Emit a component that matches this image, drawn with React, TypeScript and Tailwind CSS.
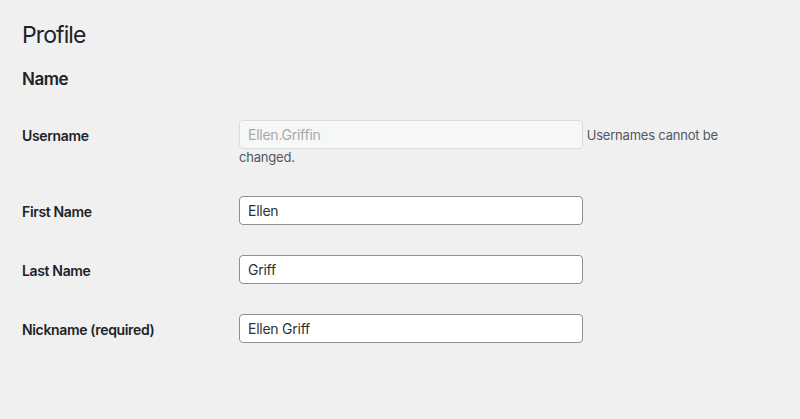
import React from "react";

const font = { fontFamily: 'Inter, "Noto Sans", "Liberation Sans", sans-serif' };

function Row({
  label,
  children,
  tdClass = "leading-[20px]",
}: {
  label: string;
  children: React.ReactNode;
  tdClass?: string;
}) {
  return (
    <div className="flex items-start py-[15px]">
      <div className="w-[217px] shrink-0 pt-[6px] text-[14px] leading-[20px] font-semibold tracking-[-0.35px] text-[#1d2327]">
        {label}
      </div>
      <div className={"w-[510px] text-[13px] text-[#50575e] " + tdClass}>{children}</div>
    </div>
  );
}

function TextInput({ value, disabled }: { value: string; disabled?: boolean }) {
  return (
    <input
      type="text"
      defaultValue={value}
      disabled={disabled}
      className={
        disabled
          ? "inline-block align-baseline w-[344px] h-[29px] rounded-[4px] border border-[#dcdcde] bg-[#f6f7f7] pl-[8px] pr-[7px] text-[14px] leading-[27px] tracking-[-0.25px] text-[#a7aaad] outline-none"
          : "inline-block align-baseline w-[344px] h-[29px] rounded-[4px] border border-[#8c8f94] bg-white pl-[8px] pr-[7px] text-[14px] leading-[27px] tracking-[-0.25px] text-[#2c3338] outline-none"
      }
      style={font}
    />
  );
}

export default function App() {
  return (
    <div className="w-[800px] h-[419px] bg-[#f0f0f1] pl-[22px] overflow-hidden" style={font}>
      <h1 className="pt-[21px] text-[23px] leading-[29px] font-normal tracking-[-0.9px] text-[#1d2327]">
        Profile
      </h1>
      <h2 className="mt-[18px] text-[17px] leading-[22px] font-semibold tracking-[-0.5px] text-[#1d2327]">
        Name
      </h2>
      <div className="mt-[15px]">
        <Row label="Username" tdClass="leading-[17px]">
          <TextInput value="Ellen.Griffin" disabled />{" "}
          <span className="text-[13px] tracking-[-0.2px]">Usernames cannot be changed.</span>
        </Row>
        <Row label="First Name">
          <TextInput value="Ellen" />
        </Row>
        <Row label="Last Name">
          <TextInput value="Griff" />
        </Row>
        <Row label="Nickname (required)">
          <TextInput value="Ellen Griff" />
        </Row>
      </div>
    </div>
  );
}
